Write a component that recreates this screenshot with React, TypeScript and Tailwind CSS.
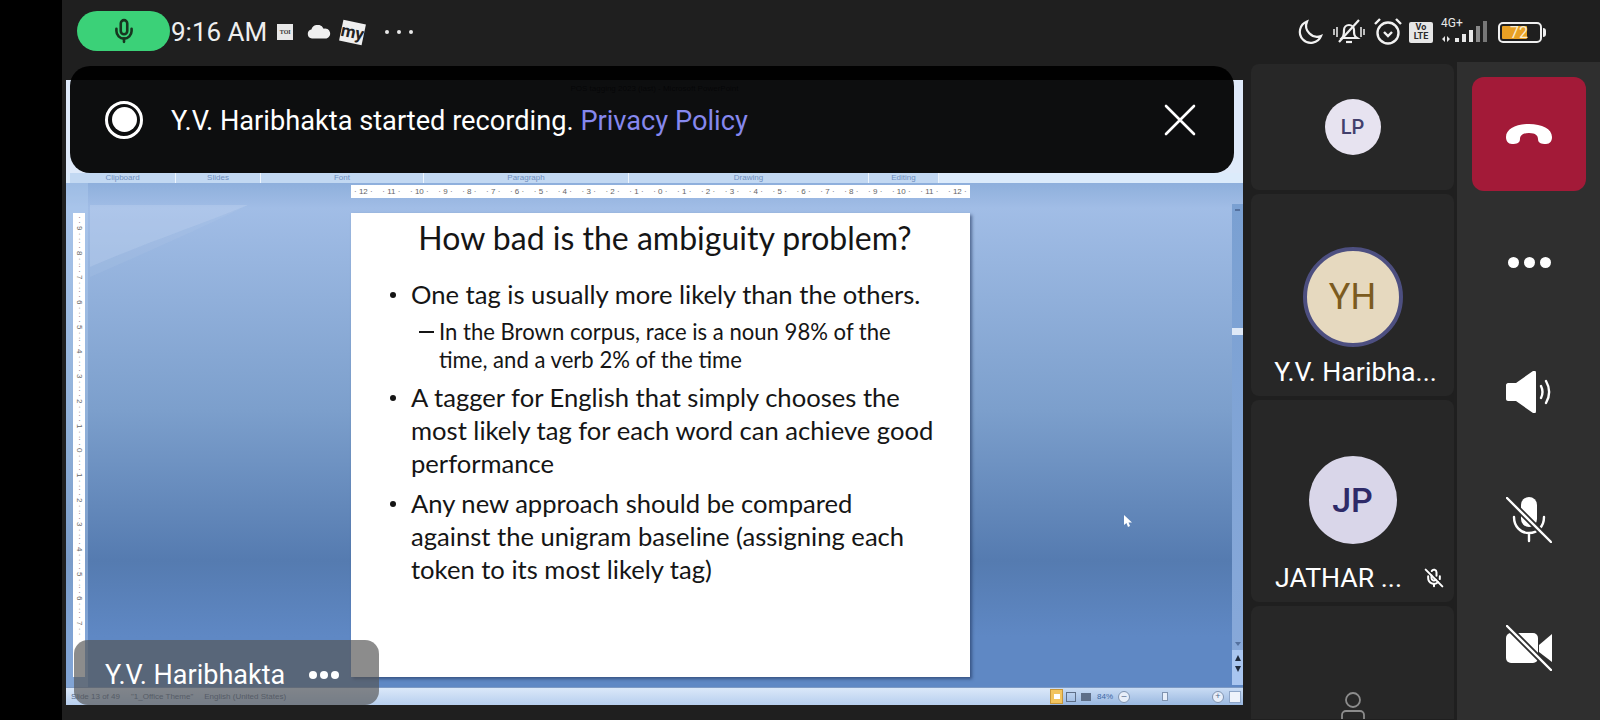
import { Mic, MicOff } from 'lucide-react'

const H_RULER = [12, 11, 10, 9, 8, 7, 6, 5, 4, 3, 2, 1, 0, 1, 2, 3, 4, 5, 6, 7, 8, 9, 10, 11, 12]
const V_RULER = [9, 8, 7, 6, 5, 4, 3, 2, 1, 0, 1, 2, 3, 4, 5, 6, 7]
const RIBBON_GROUPS = [
  { label: 'Clipboard', w: 'w-[106px]' },
  { label: 'Slides', w: 'w-[85px]' },
  { label: 'Font', w: 'w-[163px]' },
  { label: 'Paragraph', w: 'w-[205px]' },
  { label: 'Drawing', w: 'w-[240px]' },
  { label: 'Editing', w: 'w-[70px]' },
]

function StatusBar() {
  return (
    <div className="h-[64px] flex items-center shrink-0 text-[#efefef]">
      <div className="ml-[15px] w-[93px] h-[40px] mt-[-2px] rounded-full bg-[#3bd178] flex items-center justify-center text-[#17351f]">
        <Mic size={26} strokeWidth={2.4} />
      </div>
      <span className="ml-[1px] mt-[-1px] text-[26px] font-normal leading-none">9:16 AM</span>
      <div className="ml-[10px] w-[16px] h-[16px] bg-[#e8e8e8] text-[#333] text-[6px] font-bold flex items-center justify-center font-['Liberation_Serif',serif]">TOI</div>
      <svg className="ml-[14px]" width="24" height="14" viewBox="0 0 24 14" fill="#efefef">
        <path d="M5 13.500a4.500 4.500 0 0 1-.6-8.900A6.500 6.500 0 0 1 16.600 3.700 5 5 0 0 1 19.500 13.500Z" />
      </svg>
      <div className="ml-[10px] w-[23px] h-[21px] bg-[#efefef] text-[#222] text-[17px] font-bold leading-none flex items-center justify-center rotate-[12deg]">my</div>
      <div className="ml-[21px] flex gap-[8px]">
        <span className="w-[4px] h-[4px] rounded-full bg-[#e8e8e8]" />
        <span className="w-[4px] h-[4px] rounded-full bg-[#e8e8e8]" />
        <span className="w-[4px] h-[4px] rounded-full bg-[#e8e8e8]" />
      </div>

      <div className="ml-auto mr-[54px] flex items-center">
        <svg width="26" height="26" viewBox="0 0 26 26" fill="none" stroke="#f2f2f2" strokeWidth="2.2">
          <path d="M10 2.500A11 11 0 1 0 24 17 11 11 0 0 1 10 2.500Z" />
        </svg>
        <svg className="ml-[10px]" width="32" height="28" viewBox="0 0 32 28" fill="none" stroke="#f2f2f2" strokeWidth="2.2">
          <path d="M9 20c2-2 2-4 2-8a5 5 0 0 1 10 0c0 4 0 6 3 8Z" />
          <path d="M13 24h6" />
          <path d="M6 24 26 2" />
          <path d="M1 11v6M4 9v10M28 9v10M31 11v6" strokeWidth="1.5" />
        </svg>
        <svg className="ml-[8px]" width="30" height="30" viewBox="0 0 30 30" fill="none" stroke="#f2f2f2" strokeWidth="2.4">
          <circle cx="15" cy="16" r="10.500" />
          <path d="m11 15 4 4 4-4" />
          <path d="M2 7l5-5M28 7l-5-5" />
        </svg>
        <div className="ml-[6px] w-[24px] h-[21px] rounded-[2px] bg-[#e6e6e6] text-[#2a2a2a] text-[9px] font-bold leading-[9px] flex flex-col items-center justify-center">
          <span>Vo</span>
          <span>LTE</span>
        </div>
        <div className="ml-[8px] w-[48px] h-[26px] relative">
          <span className="absolute left-0 top-[-2px] text-[12px] leading-none text-[#e8e8e8]">4G+</span>
          <svg className="absolute left-0 top-0" width="48" height="26" viewBox="0 0 48 26" fill="#e8e8e8">
            <path d="M1 20l3-3v6ZM6 17l3 3-3 3Z" />
            <rect x="14" y="19" width="4" height="4" />
            <rect x="21" y="15" width="4" height="8" />
            <rect x="28" y="11" width="4" height="12" />
            <rect x="35" y="7" width="4" height="16" fill="#8a8a8a" />
            <rect x="42" y="2" width="4" height="21" fill="#777" />
          </svg>
        </div>
        <div className="ml-[9px] w-[44px] h-[21px] rounded-[5px] border-2 border-[#efefef] p-[2px] relative">
          <div className="w-[25px] h-full rounded-[1px] bg-[#e8a024]" />
          <span className="absolute left-[10px] top-0 text-[16px] leading-[17px] text-[#f6ecd2]">72</span>
        </div>
        <span className="ml-[1px] w-[3px] h-[9px] rounded-r-sm bg-[#efefef]" />
      </div>
    </div>
  )
}

function Bullet({ children }: { children: string }) {
  return (
    <div className="flex items-center">
      <span className="w-[6px] h-[6px] rounded-full bg-[#151515] mr-[15px] shrink-0" />
      <span>{children}</span>
    </div>
  )
}

function Slide() {
  return (
    <div className="w-[619px] h-[464px] bg-white shadow-[2px_2px_3px_rgba(30,50,90,0.6)] text-[#151515] font-['Lato',sans-serif] shrink-0">
      <div className="h-[52px] pt-[6px] pl-[9px] text-center text-[32px] leading-[38px]">How bad is the ambiguity problem?</div>
      <div className="mt-[13px] pl-[39px] text-[25.6px] leading-[33px]">
        <Bullet>One tag is usually more likely than the others.</Bullet>
        <div className="mt-[7px] flex text-[22.1px] leading-[28px]">
          <span className="ml-[29px] mt-[13px] w-[15px] h-[2px] bg-[#151515] shrink-0" />
          <span className="ml-[5px]">In the Brown corpus, race is a noun 98% of the</span>
        </div>
        <div className="pl-[49px] text-[22.1px] leading-[28px]">time, and a verb 2% of the time</div>
        <div className="mt-[7px]">
          <Bullet>A tagger for English that simply chooses the</Bullet>
          <div className="pl-[21px]">most likely tag for each word can achieve good</div>
          <div className="pl-[21px]">performance</div>
        </div>
        <div className="mt-[7px]">
          <Bullet>Any new approach should be compared</Bullet>
          <div className="pl-[21px]">against the unigram baseline (assigning each</div>
          <div className="pl-[21px]">token to its most likely tag)</div>
        </div>
      </div>
    </div>
  )
}

function ShareWindow() {
  return (
    <div className="ml-[4px] mt-[16px] w-[1177px] h-[625px] flex flex-col bg-[#d9e7f8] font-['Liberation_Sans',sans-serif]">
      {/* ribbon, mostly hidden under the toast */}
      <div className="h-[93px] shrink-0 bg-[#dfeafa] text-[#5a6a80] text-[8px]">
        <div className="pt-[3px] text-center">POS tagging 2023 (last) - Microsoft PowerPoint</div>
      </div>
      <div className="h-[10px] shrink-0 flex bg-[#dcebfb] text-[8px] leading-[10px] text-[#6f8fbe]">
        <span className="w-[4px]" />
        {RIBBON_GROUPS.map((g) => (
          <span key={g.label} className={`${g.w} text-center bg-[#c2d8f2] border-r border-[#eef5fd]`}>
            {g.label}
          </span>
        ))}
      </div>

      <div className="flex-1 flex bg-[linear-gradient(180deg,#8eafdc_0%,#a1bde6_5%,#7c9fcc_45%,#557bb0_75%,#5f88c4_90%,#5f88c4_100%)] relative min-h-0">
        <svg className="absolute left-[24px] top-[22px]" width="200" height="80" viewBox="0 0 200 80">
          <path d="M0 0H158C110 20 50 40 0 62Z" fill="#c6d8f2" fillOpacity="0.35" />
          <path d="M0 62C50 40 110 20 158 0C110 24 50 50 0 72Z" fill="#c6d8f2" fillOpacity="0.12" />
        </svg>
        {/* mouse pointer of the presenter */}
        <svg className="absolute left-[1058px] top-[332px]" width="9" height="12" viewBox="0 0 9 12" fill="#fff">
          <path d="M0 0v10l2.500-2 1.500 4 2-1-1.500-3.500H8Z" />
        </svg>
        <div className="w-[22px] shrink-0 bg-[#b5cff0]/40 pl-[7px]">
          <div className="mt-[30px] w-[12px] h-[464px] bg-white flex flex-col items-center pt-[3px] text-[8px] text-[#666] overflow-hidden">
            {V_RULER.map((n, i) => (
              <span key={i} className="h-[24.7px] flex items-center justify-center whitespace-nowrap rotate-90 shrink-0">
                {`· · ${n} · ·`}
              </span>
            ))}
          </div>
        </div>
        <div className="ml-[263px] flex flex-col shrink-0">
          <div className="mt-[2px] h-[13px] w-[619px] bg-white flex justify-between px-[3px] text-[8px] leading-[13px] text-[#666] whitespace-nowrap">
            {H_RULER.map((n, i) => (
              <span key={i}>{`· ${n} ·`}</span>
            ))}
          </div>
          <div className="mt-[15px]">
            <Slide />
          </div>
        </div>
        <div className="ml-auto mt-[21px] mb-[2px] w-[11px] bg-gradient-to-b from-[#7aa0d2] to-[#88a9da] flex flex-col items-center">
          <span className="mt-[5px] w-[5px] h-[2px] bg-[#54719f]" />
          <span className="mt-[117px] w-[11px] h-[7px] bg-[#dfe9f7] shrink-0" />
          <span className="mt-auto mb-[4px] w-0 h-0 border-x-[3px] border-x-transparent border-t-[4px] border-t-[#54719f]" />
          <div className="w-[11px] h-[35px] bg-[#a9c6f0] flex flex-col items-center pt-[5px] gap-[5px]">
            <span className="w-0 h-0 border-x-[3px] border-x-transparent border-b-[6px] border-b-[#1e2a3c]" />
            <span className="w-0 h-0 border-x-[3px] border-x-transparent border-t-[6px] border-t-[#1e2a3c]" />
          </div>
        </div>
      </div>

      <div className="h-[18px] shrink-0 bg-gradient-to-b from-[#dbe8f9] to-[#b7cfee] flex items-center text-[8px] text-[#54698a] border-t border-[#7d9ac4]">
        <span className="ml-[5px]">Slide 13 of 49</span>
        <span className="ml-[11px]">"1_Office Theme"</span>
        <span className="ml-[11px]">English (United States)</span>
        <div className="ml-auto h-full flex items-center pr-[2px] bg-gradient-to-b from-[#c9dcf4] to-[#9ab8e0]">
          <span className="w-[13px] h-[15px] bg-[#f2c45e] border border-[#c7963a] flex items-center justify-center">
            <span className="w-[6px] h-[5px] bg-white" />
          </span>
          <span className="ml-[3px] w-[10px] h-[10px] border border-[#5e6f88]" />
          <span className="ml-[5px] w-[10px] h-[8px] bg-[#5e6f88]" />
          <span className="ml-[6px] text-[#3d68a5] text-[8px] w-[16px]">84%</span>
          <span className="ml-[5px] w-[12px] h-[12px] rounded-full bg-[#e7eef9] border border-[#7f93b0] text-[9px] leading-[9px] text-center">–</span>
          <span className="ml-[32px] w-[6px] h-[9px] bg-[#e7eef9] border border-[#7f93b0]" />
          <span className="ml-[44px] w-[12px] h-[12px] rounded-full bg-[#e7eef9] border border-[#7f93b0] text-[9px] leading-[9px] text-center">+</span>
          <span className="ml-[5px] w-[12px] h-[12px] bg-[#eef3fb] border border-[#8ea6c8]" />
        </div>
      </div>
    </div>
  )
}

function Toast() {
  return (
    <div className="absolute left-[8px] top-[2px] w-[1164px] h-[107px] rounded-[20px] bg-black/[0.94] flex items-center text-white text-[27.2px]">
      <span className="ml-[35px] w-[38px] h-[38px] rounded-full border-[3px] border-white flex items-center justify-center shrink-0">
        <span className="w-[25px] h-[25px] rounded-full bg-white" />
      </span>
      <span className="ml-[28px] mt-[3px]">
        Y.V. Haribhakta started recording. <span className="text-[#8688ee]">Privacy Policy</span>
      </span>
      <svg className="ml-auto mr-[38px]" width="32" height="32" viewBox="0 0 32 32" stroke="#fff" strokeWidth="2.6" strokeLinecap="round">
        <path d="M2 2 30 30M30 2 2 30" />
      </svg>
    </div>
  )
}

function NameTag() {
  return (
    <div className="absolute left-[12px] bottom-[15px] w-[305px] h-[65px] rounded-[14px] bg-[#555555]/[0.68] flex items-center pt-[5px] pl-[31px] text-white text-[27px]">
      <span>Y.V. Haribhakta</span>
      <div className="ml-[24px] flex gap-[3px]">
        <span className="w-[8px] h-[8px] rounded-full bg-white" />
        <span className="w-[8px] h-[8px] rounded-full bg-white" />
        <span className="w-[8px] h-[8px] rounded-full bg-white" />
      </div>
    </div>
  )
}

function Tiles() {
  return (
    <div className="ml-[8px] w-[203px] flex flex-col gap-[4px] shrink-0 text-white text-[26.7px]">
      <div className="h-[126px] rounded-lg bg-[#272727] flex items-center justify-center">
        <div className="w-[56px] h-[56px] rounded-full bg-[#e7e3f0] text-[#423f6c] text-[20px] font-medium flex items-center justify-center">LP</div>
      </div>
      <div className="h-[202px] rounded-lg bg-[#272727] flex flex-col items-center pt-[53px]">
        <div className="w-[100px] h-[100px] rounded-full bg-[#e6d9bf] border-[4px] border-[#4d4f80] text-[#7b5b20] text-[36px] flex items-center justify-center">YH</div>
        <span className="mt-[9px] ml-[6px] leading-[32px]">Y.V. Haribha...</span>
      </div>
      <div className="h-[202px] rounded-lg bg-[#272727] flex flex-col items-center pt-[56px]">
        <div className="w-[88px] h-[88px] rounded-full bg-[#d9d6e9] text-[#2e2a68] text-[34px] font-medium flex items-center justify-center">JP</div>
        <div className="mt-[18px] w-full pl-[24px] pr-[10px] flex items-center justify-between leading-[32px]">
          <span>JATHAR ...</span>
          <MicOff size={20} strokeWidth={2.4} />
        </div>
      </div>
      <div className="h-[113px] rounded-t-lg bg-[#272727] flex justify-center pt-[86px]">
        <svg width="28" height="27" viewBox="0 0 28 27" fill="none" stroke="#8c8c8c" strokeWidth="1.8">
          <circle cx="14" cy="8" r="7" />
          <path d="M3 27v-4a4 4 0 0 1 4-4h14a4 4 0 0 1 4 4v4" />
        </svg>
      </div>
    </div>
  )
}

function Controls() {
  return (
    <div className="ml-[3px] w-[144px] h-[658px] -mt-[2px] bg-[#2f2f2f] flex flex-col items-center text-white shrink-0">
      <div className="mt-[15px] mr-[1px] w-[114px] h-[114px] rounded-[12px] bg-[#a31a38] flex items-center justify-center">
        <svg width="46" height="20" viewBox="0 0 46 20" fill="#fff">
          <path d="M0 13C0 5 10 0 23 0s23 5 23 13c0 4-2 7-6 7-5 0-8-1-8-5 0-3-2-6-9-6s-9 3-9 6c0 4-3 5-8 5-4 0-6-3-6-7Z" />
        </svg>
      </div>
      <div className="mt-[66px] flex gap-[5px]">
        <span className="w-[11px] h-[11px] rounded-full bg-white" />
        <span className="w-[11px] h-[11px] rounded-full bg-white" />
        <span className="w-[11px] h-[11px] rounded-full bg-white" />
      </div>
      <svg className="mt-[103px]" width="46" height="42" viewBox="0 0 46 42" fill="#fff">
        <path d="M2 12h8L27 0c2-1 3 0 3 2v38c0 2-1 3-3 2L10 30H2c-1 0-2-1-2-2V14c0-1 1-2 2-2Z" />
        <path d="M35 15c2 4 2 8 0 12M40 10c4 7 4 15 0 22" fill="none" stroke="#fff" strokeWidth="2.4" strokeLinecap="round" />
      </svg>
      <svg className="mt-[84px]" width="46" height="46" viewBox="0 0 46 46" fill="none" stroke="#fff" strokeWidth="2.4" strokeLinecap="round">
        <rect x="15" y="0" width="16" height="30" rx="8" fill="#fff" stroke="none" />
        <path d="M8 20c0 9 6 16 15 16s15-7 15-16M23 36v8" />
        <path d="M1 1 45 45" stroke="#2f2f2f" strokeWidth="6" />
        <path d="M1 1 45 45" />
      </svg>
      <svg className="mt-[82px]" width="46" height="46" viewBox="0 0 46 46" fill="#fff">
        <rect x="0" y="8" width="32" height="30" rx="5" />
        <path d="M33 20 46 9v28L33 27Z" />
        <path d="M1 1 45 45" stroke="#2f2f2f" strokeWidth="6" />
        <path d="M1 1 45 45" stroke="#fff" strokeWidth="2.4" strokeLinecap="round" />
      </svg>
    </div>
  )
}

export default function App() {
  return (
    <div className="w-[1600px] h-[720px] flex bg-black font-['Roboto',sans-serif] overflow-hidden">
      <div className="w-[62px] shrink-0" />
      <div className="flex-1 flex flex-col bg-[#1f1f1f] min-w-0">
        <StatusBar />
        <div className="flex flex-1 min-h-0">
          <div className="relative w-[1181px] shrink-0">
            <ShareWindow />
            <Toast />
            <NameTag />
          </div>
          <Tiles />
          <Controls />
        </div>
      </div>
    </div>
  )
}
